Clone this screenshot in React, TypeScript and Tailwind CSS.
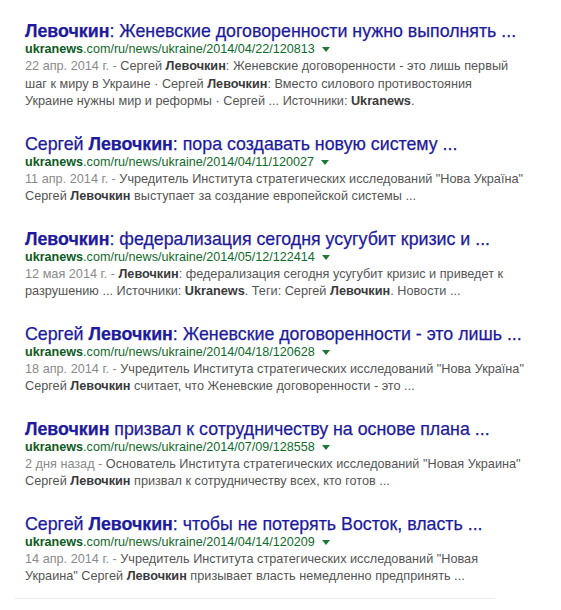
type Part = string | { b: string };

type Result = {
  title: Part[];
  url: string;
  date: string;
  lines: Part[][];
};

const results: Result[] = [
  {
    title: [{ b: 'Левочкин' }, ': Женевские договоренности нужно выполнять ...'],
    url: '.com/ru/news/ukraine/2014/04/22/120813',
    date: '22 апр. 2014 г. - ',
    lines: [
      ['Сергей ', { b: 'Левочкин' }, ': Женевские договоренности - это лишь первый'],
      ['шаг к миру в Украине · Сергей ', { b: 'Левочкин' }, ': Вместо силового противостояния'],
      ['Украине нужны мир и реформы · Сергей ... Источники: ', { b: 'Ukranews' }, '.'],
    ],
  },
  {
    title: ['Сергей ', { b: 'Левочкин' }, ': пора создавать новую систему ...'],
    url: '.com/ru/news/ukraine/2014/04/11/120027',
    date: '11 апр. 2014 г. - ',
    lines: [
      ['Учредитель Института стратегических исследований "Нова Україна"'],
      ['Сергей ', { b: 'Левочкин' }, ' выступает за создание европейской системы ...'],
    ],
  },
  {
    title: [{ b: 'Левочкин' }, ': федерализация сегодня усугубит кризис и ...'],
    url: '.com/ru/news/ukraine/2014/05/12/122414',
    date: '12 мая 2014 г. - ',
    lines: [
      [{ b: 'Левочкин' }, ': федерализация сегодня усугубит кризис и приведет к'],
      ['разрушению ... Источники: ', { b: 'Ukranews' }, '. Теги: Сергей ', { b: 'Левочкин' }, '. Новости ...'],
    ],
  },
  {
    title: ['Сергей ', { b: 'Левочкин' }, ': Женевские договоренности - это лишь ...'],
    url: '.com/ru/news/ukraine/2014/04/18/120628',
    date: '18 апр. 2014 г. - ',
    lines: [
      ['Учредитель Института стратегических исследований "Нова Україна"'],
      ['Сергей ', { b: 'Левочкин' }, ' считает, что Женевские договоренности - это ...'],
    ],
  },
  {
    title: [{ b: 'Левочкин' }, ' призвал к сотрудничеству на основе плана ...'],
    url: '.com/ru/news/ukraine/2014/07/09/128558',
    date: '2 дня назад - ',
    lines: [
      ['Основатель Института стратегических исследований "Новая Украина"'],
      ['Сергей ', { b: 'Левочкин' }, ' призвал к сотрудничеству всех, кто готов ...'],
    ],
  },
  {
    title: ['Сергей ', { b: 'Левочкин' }, ': чтобы не потерять Восток, власть ...'],
    url: '.com/ru/news/ukraine/2014/04/14/120209',
    date: '14 апр. 2014 г. - ',
    lines: [
      ['Учредитель Института стратегических исследований "Новая'],
      ['Украина" Сергей ', { b: 'Левочкин' }, ' призывает власть немедленно предпринять ...'],
    ],
  },
];

function Parts({ parts, boldClass }: { parts: Part[]; boldClass: string }) {
  return (
    <>
      {parts.map((p, i) =>
        typeof p === 'string' ? <span key={i}>{p}</span> : <b key={i} className={boldClass}>{p.b}</b>
      )}
    </>
  );
}

function ResultItem({ r }: { r: Result }) {
  return (
    <div className="mb-[24px]">
      <h3 className="text-[17.8px] leading-[18px] text-[#1d1a9c] whitespace-nowrap [-webkit-text-stroke:0.25px_#1d1a9c]">
        <Parts parts={r.title} boldClass="font-bold" />
      </h3>
      <div className="flex items-center text-[12.6px] leading-[18px] text-[#116a2a] whitespace-nowrap">
        <span>
          <b className="font-bold text-[#0b5a1e]">ukranews</b>
          {r.url}
        </span>
        <span className="ml-[7px] mt-[1px] border-x-[4px] border-t-[5px] border-x-transparent border-t-[#1a7a35]" />
      </div>
      <div className="text-[12.7px] leading-[17.5px] text-[#555555]">
        {r.lines.map((line, i) => (
          <div key={i} className="whitespace-nowrap">
            {i === 0 && <span className="text-[#8a8a8a]">{r.date}</span>}
            <Parts parts={line} boldClass="font-bold text-[#3a3a3a]" />
          </div>
        ))}
      </div>
    </div>
  );
}

export default function App() {
  return (
    <div className="w-[561px] h-[610px] bg-white font-['Liberation_Sans',Arial,sans-serif] overflow-hidden">
      <div className="pt-[22px] pl-[25px]">
        {results.map((r, i) => (
          <ResultItem key={i} r={r} />
        ))}
      </div>
      <div className="-mt-[12px] ml-[15px] w-[480px] border-t border-[#ebebeb]" />
    </div>
  );
}
